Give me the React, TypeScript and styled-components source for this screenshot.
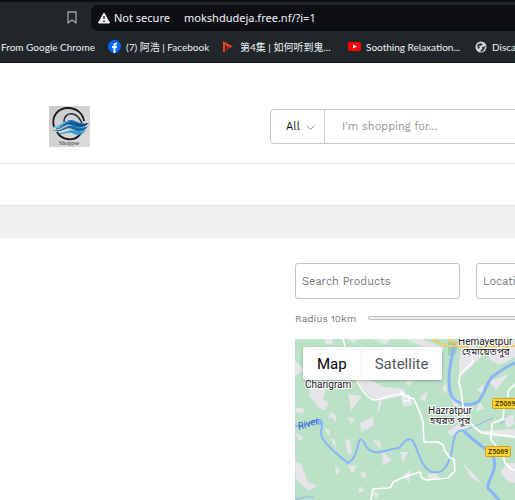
import React from "react";
import styled, { createGlobalStyle } from "styled-components";

const GlobalStyle = createGlobalStyle`
  * { box-sizing: border-box; }
  body { margin: 0; background: #fff; font-family: "Work Sans", "Liberation Sans", sans-serif; }
  #root { overflow: hidden; }
`;

const Chrome = styled.header`
  background: #20262a;
  border-top: 2px solid #0b0e12;
  border-bottom: 1px solid #14181c;
  color: #f1f3f4;
  font-family: Lato, "Noto Sans CJK SC", sans-serif;
  overflow: hidden;
`;

const AddressRow = styled.div`
  display: flex;
  align-items: center;
  gap: 13px;
  padding: 3px 0 0 66px;
`;

const IconButton = styled.button`
  display: flex;
  padding: 0;
  border: 0;
  background: none;
  color: #9ea7ad;
`;

const AddressBar = styled.div`
  display: flex;
  flex: 1;
  align-items: center;
  height: 26px;
  padding-left: 7px;
  border-radius: 7px 0 0 7px;
  background: #0d0f14;
  font-size: 11px;
  line-height: 16px;
  white-space: nowrap;
`;

const Security = styled.span`
  width: 70px;
  margin-left: 4px;
  font-family: "Noto Sans", sans-serif;
`;

const AddressInput = styled.input`
  flex: 1;
  min-width: 0;
  padding: 0;
  border: 0;
  outline: 0;
  background: none;
  color: #f1f3f4;
  font: 11px/16px "Noto Sans", sans-serif;
`;

const Bookmarks = styled.nav`
  display: flex;
  align-items: center;
  height: 31px;
  gap: 13px;
  padding-left: 1px;
`;

const Bookmark = styled.a<{ $width: number }>`
  display: flex;
  flex: 0 0 ${(p) => p.$width}px;
  min-width: 0;
  align-items: center;
  gap: 5px;
  color: #f1f3f4;
  font-size: 10px;
  line-height: 16px;
  text-decoration: none;
  white-space: nowrap;
  svg { flex: none; }
`;

const StoreHeader = styled.div`
  display: flex;
  align-items: flex-start;
  gap: 180px;
  height: 101px;
  padding: 26px 0 0 49px;
  border-bottom: 1px solid #e1e1e1;
`;

const Logo = styled.a`
  display: flex;
  margin-top: 17px;
`;

const SearchForm = styled.form`
  display: flex;
  flex: 1 0 300px;
  height: 35px;
  margin-top: 20px;
  border: 1px solid #c9c9c9;
  border-radius: 4px;
`;

const CategoryWrap = styled.label`
  display: flex;
  position: relative;
  width: 54px;
  border-right: 1px solid #c9c9c9;
  svg { position: absolute; right: 9px; top: 13px; pointer-events: none; }
`;

const Category = styled.select`
  width: 100%;
  padding: 0 0 0 15px;
  border: 0;
  appearance: none;
  background: none;
  color: #111;
  font: 11px "Work Sans", "DejaVu Sans", sans-serif;
`;

const Query = styled.input`
  flex: 1;
  min-width: 0;
  padding: 0 17px;
  border: 0;
  background: none;
  font: 11px "Work Sans", "DejaVu Sans", sans-serif;
  &::placeholder { color: #929292; }
`;

const MenuStrip = styled.div`
  height: 42px;
  border-bottom: 1px solid #e1e1e1;
`;

const Breadcrumb = styled.div`
  height: 32px;
  background: #f0f0f0;
`;

const Finder = styled.main`
  padding: 25px 0 0 295px;
`;

const Fields = styled.div`
  display: flex;
  gap: 16px;
`;

const Field = styled.input`
  flex: 0 0 165px;
  width: 165px;
  height: 36px;
  padding: 0 6px;
  border: 1px solid #c4c4c4;
  border-radius: 3px;
  font: 11px "Work Sans", "DejaVu Sans", sans-serif;
  &::placeholder { color: #777; }
`;

const Radius = styled.label`
  display: flex;
  align-items: center;
  gap: 12px;
  height: 40px;
  padding-bottom: 2px;
  color: #777;
  font: 10px "Work Sans", "DejaVu Sans", sans-serif;
  white-space: nowrap;
`;

const Slider = styled.input`
  flex: 1 0 260px;
  height: 4px;
  margin: 0;
  border: 1px solid #c2c2c2;
  border-radius: 3px;
  appearance: none;
  background: #efefef;
`;

const MapPanel = styled.section`
  position: relative;
  height: 161px;
  overflow: hidden;
  background: #bbe2c6;
`;

const MapArt = styled.svg`
  display: block;
  width: 100%;
  height: 100%;
`;

const MapTypes = styled.div`
  display: flex;
  position: absolute;
  left: 8px;
  top: 8px;
  height: 33px;
  border-radius: 2px;
  background: #fff;
  box-shadow: 0 1px 3px #0004;
`;

const MapType = styled.button<{ $active?: boolean }>`
  padding: 0 14px;
  border: 0;
  border-left: ${(p) => (p.$active ? "0" : "1px solid #eee")};
  background: none;
  color: ${(p) => (p.$active ? "#000" : "#565656")};
  font: 15px Roboto, sans-serif;
  &:last-child { padding-left: 13px; }
`;

const Label = styled.text`
  fill: #202124;
  stroke: #fff;
  stroke-width: 2px;
  stroke-linejoin: round;
  paint-order: stroke;
  font: 10px Roboto, "Noto Sans Bengali", sans-serif;
`;

const RiverLabel = styled.text`
  fill: #2b62c0;
  font: italic 10px Roboto, sans-serif;
`;

const BadgeLabel = styled.text`
  fill: #3b3000;
  font: 500 7px Roboto, sans-serif;
`;

const LogoArt = () => (
  <svg width="41" height="41" viewBox="0 0 41 41" role="img" aria-label="Shoppse">
    <defs>
      <linearGradient id="paper" x1="0" y1="0" x2="1" y2="1">
        <stop stopColor="#c9cacb" />
        <stop offset="1" stopColor="#dedcdb" />
      </linearGradient>
      <linearGradient id="wave" x1="0" y1="0" x2="1" y2="0">
        <stop stopColor="#45b0e6" />
        <stop offset=".5" stopColor="#1872b4" />
        <stop offset="1" stopColor="#0b5590" />
      </linearGradient>
    </defs>
    <path d="M0 0H41V41H0Z" fill="url(#paper)" />
    <path d="M5 21C2 10 9 2 19 2C28 2 34 8 35 15M8 26C13 35 27 36 32 27" fill="none" stroke="#15191d" strokeWidth="1.800" />
    <path d="M15 16C15 10 19 7 24 8C29 9 31 13 33 17" fill="none" stroke="#253038" strokeWidth="1.500" />
    <path d="M2 21C10 23 14 14 22 14C27 14 29 19 40 17C35 22 29 23 24 20C17 16 12 24 2 21Z" fill="url(#wave)" />
    <path d="M3 24C14 26 18 17 24 20C30 23 34 22 39 20C34 28 28 26 23 23C17 20 13 28 3 24Z" fill="#1769a8" />
    <path d="M8 27C17 28 20 22 26 25C30 27 34 26 37 24C32 31 27 29 23 27C18 25 14 30 8 27Z" fill="#2598d5" />
    <path d="M7 23C15 22 18 16 23 17C28 19 33 21 38 18" fill="none" stroke="#0b3e6d" strokeWidth=".8" />
    <path d="M5 21C11 21 15 15 20 15" fill="none" stroke="#7bd0f5" strokeWidth=".8" />
    <text x="20" y="39" textAnchor="middle" fontFamily="Liberation Serif, serif" fontSize="6" fill="#333">Shoppse</text>
  </svg>
);

const land = [
  "M323 339H333L332 345L326 344Z", "M347 339H359L354 343Z", "M373 339H390L386 345Z",
  "M405 339H421L443 347V353L430 350Z", "M295 360L304 370L295 376Z",
  "M310 388L326 389L323 400L329 402L325 410L318 408L314 401L309 396Z",
  "M348 394L362 396L351 411Z", "M379 397L382 403L377 416Z", "M331 411L338 417L328 418Z",
  "M354 377L367 378L384 387L405 389V396L386 399L376 400L366 393Z",
  "M461 346H475L482 356L473 365L460 377L459 365Z", "M482 349L515 340V357L500 365L492 361Z",
  "M404 382L413 380L409 386Z", "M422 395L428 391L425 401L420 399Z",
  "M442 388L447 383L446 395Z", "M477 390L483 384L484 394Z", "M489 381L509 374L496 390Z",
  "M450 397L459 399L457 410Z", "M475 411L480 402L484 409Z",
  "M402 396L411 398L413 405L403 407Z", "M295 407L305 409L302 414L296 412Z",
  "M347 417L355 418L351 424Z", "M360 423L374 416L373 426L361 432Z",
  "M329 415L336 417L336 423Z", "M324 427L330 431L329 437Z", "M295 432L304 438L299 441Z",
  "M330 438L335 440L336 449Z", "M345 439L350 440L352 453L348 455Z",
  "M372 440L380 441L381 449Z", "M382 451L392 460L383 466Z", "M400 452L408 452L403 462Z",
  "M295 461L301 464L308 482L317 486L309 491L296 480Z", "M335 465L340 471L336 475Z",
  "M348 465L357 466L352 474Z", "M360 472L367 473L364 479Z", "M360 486L365 491L358 493Z",
  "M374 491L379 495L375 500Z", "M447 432L457 425L471 426L458 431L451 436Z",
  "M478 431L515 429V438L490 436Z", "M503 420L513 414L515 424L508 428Z",
  "M462 462L473 473L482 484L471 477Z", "M500 472L508 463L515 463V483L508 482Z",
  "M427 475L436 472L440 479L429 480Z", "M403 475L411 470L409 483Z",
];

const MapDrawing = () => (
  <MapArt viewBox="295 339 220 161" preserveAspectRatio="xMinYMin slice" role="img" aria-label="Map around Hazratpur">
    <path d={land.join("")} fill="#e5e5ea" />
    <path d="M448 342L460 341L455 355L448 356Z" fill="#9bd0b0" />
    <g fill="none" stroke="#8ab4f8" strokeLinejoin="round" strokeLinecap="round">
      <path d="M455 344C448 369 447 386 452 397C459 405 471 407 479 401C486 391 486 384 492 377C500 371 509 365 515 363" strokeWidth="3" />
      <path d="M295 426C306 427 313 420 320 420C326 424 317 431 323 439C330 450 341 457 348 463C355 460 356 451 358 446C359 437 362 438 366 446C373 458 386 449 399 448C404 442 408 436 413 441C419 452 421 468 432 472C442 474 449 467 452 450C454 434 457 429 464 431" strokeWidth="2" />
      <path d="M464 431C472 440 487 449 493 456C500 471 482 486 490 490L499 500" strokeWidth="3" />
      <path d="M295 500C303 497 307 497 313 497M464 431L493 418M500 424L505 421" strokeWidth="1" />
    </g>
    <g fill="none" stroke="#fff" strokeWidth="1.600" strokeLinejoin="round">
      <path d="M343 339C347 349 345 356 350 367M356 379C360 387 365 397 374 400C384 400 387 394 405 394" />
      <path d="M471 351L473 362L460 374L459 382L461 391L464 414L468 420L474 427L482 433L493 434L515 437" />
      <path d="M400 391L405 396L414 399L420 413L423 422L424 442L438 442L443 445L445 451L450 458L454 459L455 471L448 478L438 479L427 480L422 478L420 472L410 475L402 478L393 482L391 487L388 488L373 489L371 500" />
      <path d="M492 423L491 440L502 452L505 463L511 469L515 470M515 384L508 391L508 397M504 408L503 419L493 423" />
    </g>
    <path d="M433 339L445 346H463L473 350L488 346H515M448 339L459 345L470 343H488" fill="none" stroke="#f7c75c" strokeWidth="2" />
    <circle cx="319.5" cy="422" r="3" fill="#8ab4f8" />
    <path d="M403 395H409V401H403Z" fill="none" stroke="#fff" />
    <rect x="492.500" y="398.500" width="32" height="10" rx="1" fill="#fdd131" stroke="#d59f19" />
    <rect x="485.500" y="446.500" width="25" height="10" rx="1" fill="#fdd131" stroke="#d59f19" />
    <BadgeLabel x="495" y="406">Z5069</BadgeLabel>
    <BadgeLabel x="488" y="454">Z5069</BadgeLabel>
    <Label x="305" y="388">Charigram</Label>
    <Label x="458" y="345">Hemayetpur</Label>
    <Label x="462" y="355">হেমায়েতপুর</Label>
    <Label x="428" y="414">Hazratpur</Label>
    <Label x="430" y="424">হযরত পুর</Label>
    <RiverLabel x="299" y="430" transform="rotate(-18 299 430)">River</RiverLabel>
  </MapArt>
);

export default function App() {
  return (
    <>
      <GlobalStyle />
      <Chrome>
        <AddressRow>
          <IconButton aria-label="Bookmark this page">
            <svg width="12" height="14" viewBox="0 0 12 14"><path d="M2 1H10V12L6 9L2 12Z" fill="none" stroke="currentColor" strokeWidth="1.300" strokeLinejoin="round" /></svg>
          </IconButton>
          <AddressBar>
            <svg width="12" height="12" viewBox="0 0 12 12"><path d="M6 1L11.500 11H.5Z" fill="#f1f3f4" stroke="#f1f3f4" strokeLinejoin="round" /><path d="M6 4V7M6 8.500V10" stroke="#0d0f14" strokeWidth="1.300" /></svg>
            <Security>Not secure</Security>
            <AddressInput aria-label="Address" defaultValue="mokshdudeja.free.nf/?i=1" />
          </AddressBar>
        </AddressRow>
        <Bookmarks aria-label="Bookmarks">
          <Bookmark href="#chrome" $width={94}>From Google Chrome</Bookmark>
          <Bookmark href="#facebook" $width={101}>
            <svg width="13" height="13" viewBox="0 0 13 13"><circle cx="6.500" cy="6.500" r="6.500" fill="#0866ff" /><path d="M5.500 13V8H4V6H5.500V5C5.500 3.200 6.500 2.500 9 2.800V4.500C7.800 4.400 7.500 4.600 7.500 5.500V6H9L8.700 8H7.500V13Z" fill="#fff" /></svg>
            (7) 阿浩 | Facebook
          </Bookmark>
          <Bookmark href="#episode" $width={113}>
            <svg width="13" height="13" viewBox="0 0 13 13"><path d="M1 1L11 6.500L5 9V6L3 5V12H1Z" fill="#e64122" /><path d="M4 6L8 7L4 11Z" fill="#a91f1a" /></svg>
            第4集 | 如何听到鬼...
          </Bookmark>
          <Bookmark href="#soothing" $width={114}>
            <svg width="13" height="13" viewBox="0 0 13 13"><rect y="2" width="13" height="9" rx="2" fill="#f00" /><path d="M5 4.500L9 6.500L5 8.500Z" fill="#fff" /></svg>
            Soothing Relaxation...
          </Bookmark>
          <Bookmark href="#discard" $width={75}>
            <svg width="12" height="12" viewBox="0 0 12 12"><circle cx="6" cy="6" r="5.500" fill="#d7d9da" /><path d="M2 4L5 2L8 3L6 5L4 5L5 7L3 8ZM7 6L11 5L9 9L7 11L5 10L7 8Z" fill="#3c4246" /></svg>
            Discard
          </Bookmark>
        </Bookmarks>
      </Chrome>
      <StoreHeader>
        <Logo href="#home"><LogoArt /></Logo>
        <SearchForm>
          <CategoryWrap>
            <Category aria-label="Category"><option>All</option></Category>
            <svg width="9" height="9" viewBox="0 0 9 9"><path d="M.5 2.500L4.500 6.500L8.500 2.500" fill="none" stroke="#929292" /></svg>
          </CategoryWrap>
          <Query aria-label="Search the store" placeholder="I'm shopping for..." />
        </SearchForm>
      </StoreHeader>
      <MenuStrip />
      <Breadcrumb />
      <Finder>
        <Fields>
          <Field aria-label="Search Products" placeholder="Search Products" />
          <Field aria-label="Location" placeholder="Location" />
        </Fields>
        <Radius>Radius 10km<Slider type="range" defaultValue={100} /></Radius>
        <MapPanel>
          <MapDrawing />
          <MapTypes>
            <MapType $active>Map</MapType>
            <MapType>Satellite</MapType>
          </MapTypes>
        </MapPanel>
      </Finder>
    </>
  );
}
